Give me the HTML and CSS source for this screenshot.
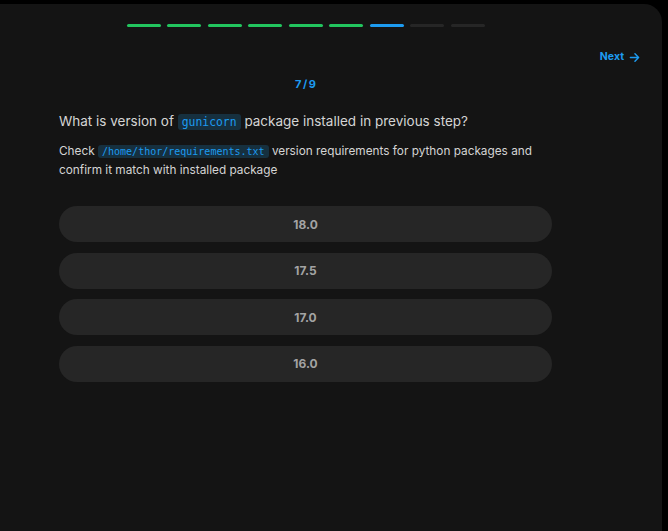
FILE: index.html
```html
<!DOCTYPE html>
<html>
<head>
<meta charset="utf-8">
<link rel="stylesheet" href="styles.css">
</head>
<body>
<div class="panel">
  <div class="progress">
    <span class="seg done"></span>
    <span class="seg done"></span>
    <span class="seg done"></span>
    <span class="seg done"></span>
    <span class="seg done"></span>
    <span class="seg done"></span>
    <span class="seg current"></span>
    <span class="seg"></span>
    <span class="seg"></span>
  </div>
  <div class="nav">
    <span class="next">Next
      <svg class="arrow" viewBox="0 0 12 12" width="11" height="11"><path d="M1.5 6h9M6.5 2l4 4-4 4" fill="none" stroke="currentColor" stroke-width="1.6" stroke-linecap="round" stroke-linejoin="round"/></svg>
    </span>
  </div>
  <div class="main">
    <div class="counter">7 / 9</div>
    <h1 class="question">What is version of <code class="code">gunicorn</code> package installed in previous step?</h1>
    <p class="desc">Check <code class="code small">/home/thor/requirements.txt</code> version requirements for python packages and confirm it match with installed package</p>
    <div class="options">
      <div class="option">18.0</div>
      <div class="option">17.5</div>
      <div class="option">17.0</div>
      <div class="option">16.0</div>
    </div>
  </div>
</div>
</body>
</html>
```
FILE: styles.css
```css
html, body {
  margin: 0;
  padding: 0;
  background: #000;
  height: 100%;
}
body {
  font-family: Inter, "Noto Sans", sans-serif;
  padding-top: 4px;
  box-sizing: border-box;
}
.panel {
  width: 662px;
  height: 527px;
  background: #141414;
  border-top-right-radius: 18px;
  box-sizing: border-box;
  padding-top: 20px;
}
.progress {
  width: 493px;
  margin-left: 59px;
  display: flex;
  justify-content: center;
  gap: 6.5px;
}
.seg {
  width: 34px;
  height: 3px;
  border-radius: 2px;
  background: #262626;
}
.seg.done { background: #22c55e; }
.seg.current { background: #1d9bf0; }
.nav {
  display: flex;
  justify-content: flex-end;
  padding-right: 22px;
  margin-top: 23px;
}
.next {
  display: flex;
  align-items: center;
  gap: 5px;
  color: #1d9bf0;
  font-size: 10.5px;
  font-weight: 700;
  line-height: 14px;
}
.main {
  width: 493px;
  margin-left: 59px;
}
.counter {
  margin-top: 13px;
  text-align: center;
  color: #1d9bf0;
  font-size: 11px;
  font-weight: 700;
  line-height: 14px;
  word-spacing: -1px;
}
.question {
  margin: 19px 0 0;
  font-size: 13.5px;
  font-weight: 400;
  line-height: 22px;
  color: #d4d4d4;
}
.code {
  font-family: "DejaVu Sans Mono", "Liberation Mono", monospace;
  font-size: 11.4px;
  color: #1d9bf0;
  background: #16303f;
  padding: 1px 4px;
  border-radius: 3px;
}
.code.small {
  font-size: 10px;
}
.desc {
  margin: 9px 0 0;
  font-size: 11.8px;
  line-height: 19px;
  color: #d4d4d4;
}
.options {
  margin-top: 26px;
  display: flex;
  flex-direction: column;
  gap: 10.67px;
}
.option {
  height: 36px;
  border-radius: 18px;
  background: #262626;
  display: flex;
  align-items: center;
  justify-content: center;
  color: #a3a3a3;
  font-size: 12px;
  font-weight: 700;
}
```
